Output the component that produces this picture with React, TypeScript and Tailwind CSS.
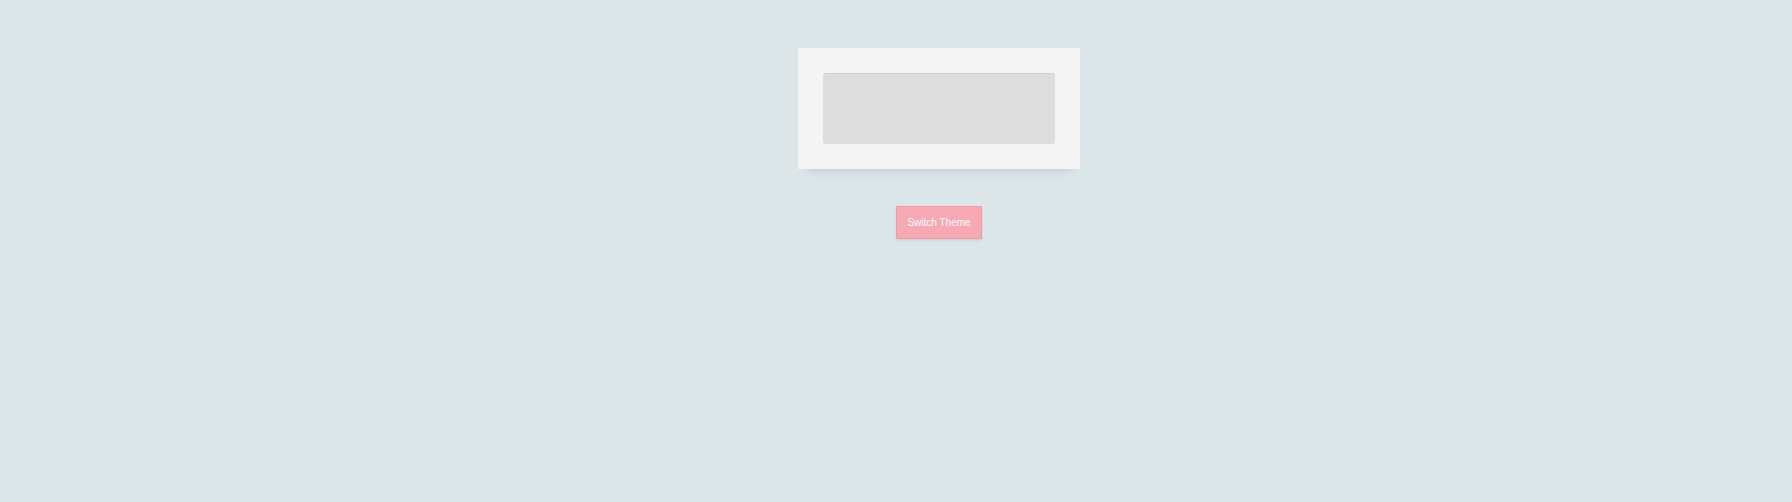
import React from 'react';

function App() {
  return (
    <div className="min-h-screen bg-[#dce5e8] pl-[86px] pt-[48px] flex flex-col items-center font-['Liberation_Sans',Arial,sans-serif]">
      <div className="w-[282px] h-[121px] bg-[#f4f4f4] px-[25px] pt-[25px] shadow-[0_9px_10px_-9px_rgba(0,0,0,0.16)]">
        <div className="h-[71px] rounded-[3px] bg-[#dddddd] border-t border-[#cfcfcf]"></div>
      </div>
      <button className="mt-[37px] w-[86px] h-[33px] bg-[#f6a8b3] border border-[#f09ba8] text-white text-[10px] shadow-[0_2px_3px_-1px_rgba(0,0,0,0.12)]">
        Switch Theme
      </button>
    </div>
  );
}

export default App;
